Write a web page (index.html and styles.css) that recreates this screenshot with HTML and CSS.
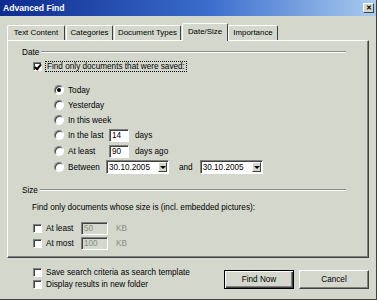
FILE: index.html
```html
<!DOCTYPE html>
<html lang="en">

<head>
    <meta charset="UTF-8">
    <title>Advanced Find</title>
    <link rel="stylesheet" href="styles.css">
</head>

<body>
    <div class="window">
        <div class="titlebar">
            <span class="title">Advanced Find</span>
            <span class="close">&#x2715;</span>
        </div>

        <div class="tabs">
            <div class="tab t-text">Text Content</div>
            <div class="tab t-cat">Categories</div>
            <div class="tab t-doc">Document Types</div>
            <div class="tab t-date active">Date/Size</div>
            <div class="tab t-imp">Importance</div>
        </div>

        <div class="panel">
            <div class="group-head"><span>Date</span><i class="etch"></i></div>

            <div class="row check-row find-only">
                <span class="checkbox checked"></span>
                <span class="focus">Find only documents that were saved:</span>
            </div>

            <div class="radios">
                <div class="row radio-row"><span class="radio on"></span><span>Today</span></div>
                <div class="row radio-row"><span class="radio"></span><span>Yesterday</span></div>
                <div class="row radio-row"><span class="radio"></span><span>In this week</span></div>
                <div class="row radio-row gap2">
                    <span class="radio"></span><span class="lbl">In the last</span>
                    <span class="field small">14</span><span class="after">days</span>
                </div>
                <div class="row radio-row gap2">
                    <span class="radio"></span><span class="lbl">At least</span>
                    <span class="field small">90</span><span class="after">days ago</span>
                </div>
                <div class="row radio-row">
                    <span class="radio"></span><span class="lbl between">Between</span>
                    <span class="combo"><span>30.10.2005</span><b class="drop"></b></span>
                    <span class="and">and</span>
                    <span class="combo"><span>30.10.2005</span><b class="drop"></b></span>
                </div>
            </div>

            <div class="group-head size-head"><span>Size</span><i class="etch"></i></div>
            <div class="row size-text">Find only documents whose size is (incl. embedded pictures):</div>

            <div class="sizes">
                <div class="row check-row">
                    <span class="checkbox"></span><span class="lbl kb">At least</span>
                    <span class="field disabled">50</span><span class="unit">KB</span>
                </div>
                <div class="row check-row">
                    <span class="checkbox"></span><span class="lbl kb">At most</span>
                    <span class="field disabled">100</span><span class="unit">KB</span>
                </div>
            </div>
        </div>

        <div class="footer">
            <div class="options">
                <div class="row check-row"><span class="checkbox"></span><span>Save search criteria as search template</span></div>
                <div class="row check-row"><span class="checkbox"></span><span>Display results in new folder</span></div>
            </div>
            <div class="buttons">
                <button class="btn default">Find Now</button>
                <button class="btn">Cancel</button>
            </div>
        </div>
    </div>
</body>

</html>
```

FILE: styles.css
```css
body {
    margin: 0;
    font-family: "Liberation Sans", Arial, sans-serif;
    font-size: 8.2px;
    color: #000000;
}

.window {
    width: 377px;
    height: 300px;
    box-sizing: border-box;
    background-color: #d3d7cc;
    border-right: 1px solid #404040;
    border-bottom: 1px solid #404040;
    overflow: hidden;
}

.titlebar {
    height: 16px;
    display: flex;
    align-items: center;
    justify-content: space-between;
    padding: 0 2px 0 3px;
    background: linear-gradient(to right, #0d2b8e, #3a6ccc 55%, #a9cbf0);
    color: #ffffff;
}

.title {
    font-weight: bold;
    font-size: 8.6px;
}

.close {
    width: 11px;
    height: 10px;
    box-sizing: border-box;
    background-color: #d3d7cc;
    border: 1px solid;
    border-color: #ffffff #404040 #404040 #ffffff;
    color: #000000;
    font-size: 7px;
    font-weight: bold;
    line-height: 8px;
    text-align: center;
}

/* tab strip */
.tabs {
    display: flex;
    align-items: flex-end;
    height: 17px;
    margin: 7px 0 0 7px;
}

.tab {
    height: 15px;
    box-sizing: border-box;
    font-size: 7.9px;
    line-height: 14px;
    text-align: center;
    white-space: nowrap;
    border: 1px solid;
    border-bottom: none;
    border-color: #ffffff #404040 transparent #ffffff;
    border-radius: 2px 2px 0 0;
    margin-right: 1px;
}

.t-text { width: 58px; }
.t-cat { width: 47px; }
.t-doc { width: 67px; }
.t-date { width: 46px; }
.t-imp { width: 50px; }

.tab.active {
    height: 18px;
    margin: 0 0 -1px 0;
    line-height: 16px;
    background-color: #d3d7cc;
    position: relative;
    z-index: 1;
}

.panel {
    width: 362px;
    height: 218px;
    box-sizing: border-box;
    margin-left: 7px;
    padding: 4px 22px 0 14px;
    border: 1px solid;
    border-color: #ffffff #404040 #404040 #ffffff;
    box-shadow: inset -1px -1px 0 #808080;
}

.row {
    display: flex;
    align-items: center;
    height: 14px;
    white-space: nowrap;
}

.group-head {
    display: flex;
    align-items: center;
    height: 14px;
}

.etch {
    flex: 1;
    height: 0;
    margin-left: 2px;
    border-top: 1px solid #8a8e86;
    border-bottom: 1px solid #ffffff;
}

.check-row {
    padding-left: 11px;
}

.checkbox {
    width: 9px;
    height: 9px;
    box-sizing: border-box;
    margin-right: 4px;
    background-color: #ffffff;
    border: 1px solid;
    border-color: #808080 #ffffff #ffffff #808080;
    box-shadow: inset 1px 1px 0 #404040;
    position: relative;
}

.checkbox.checked::after {
    content: "";
    position: absolute;
    left: 2px;
    top: 0;
    width: 2px;
    height: 5px;
    border: solid #000000;
    border-width: 0 2px 2px 0;
    transform: rotate(40deg);
}

.focus {
    outline: 1px dotted #000000;
    padding: 0 1px;
}

.radios {
    margin-top: 10px;
    padding-left: 32px;
}

.radio-row {
    margin-bottom: 1px;
}

.radio-row.gap2 {
    margin-bottom: 2px;
}

.radio {
    width: 10px;
    height: 10px;
    box-sizing: border-box;
    margin-right: 4px;
    border-radius: 50%;
    background-color: #ffffff;
    border: 1px solid;
    border-color: #808080 #ffffff #ffffff #808080;
    box-shadow: inset 1px 1px 0 #404040;
    position: relative;
}

.radio.on::after {
    content: "";
    position: absolute;
    left: 2px;
    top: 2px;
    width: 4px;
    height: 4px;
    border-radius: 50%;
    background-color: #000000;
}

.lbl {
    width: 41px;
}

.lbl.between {
    width: 38px;
}

.lbl.kb {
    width: 35px;
}

.field {
    height: 13px;
    box-sizing: border-box;
    padding-left: 2px;
    line-height: 11px;
    background-color: #ffffff;
    border: 1px solid;
    border-color: #808080 #ffffff #ffffff #808080;
    box-shadow: inset 1px 1px 0 #404040;
}

.field.small {
    width: 20px;
}

.field.disabled {
    width: 27px;
    background-color: #d3d7cc;
    color: #8a8e86;
}

.after {
    margin-left: 6px;
}

.unit {
    margin-left: 8px;
    color: #8a8e86;
}

.combo {
    width: 63px;
    height: 14px;
    box-sizing: border-box;
    display: flex;
    align-items: center;
    justify-content: space-between;
    padding: 0 1px 0 2px;
    background-color: #ffffff;
    border: 1px solid;
    border-color: #808080 #ffffff #ffffff #808080;
    box-shadow: inset 1px 1px 0 #404040;
}

.drop {
    width: 9px;
    height: 10px;
    box-sizing: border-box;
    background-color: #d3d7cc;
    border: 1px solid;
    border-color: #ffffff #404040 #404040 #ffffff;
    position: relative;
}

.drop::after {
    content: "";
    position: absolute;
    left: 1px;
    top: 3px;
    border-left: 3px solid transparent;
    border-right: 3px solid transparent;
    border-top: 3px solid #000000;
}

.and {
    margin: 0 7px 0 10px;
}

.size-head {
    margin-top: 9px;
}

.size-text {
    margin-top: 3px;
    padding-left: 10px;
}

.sizes {
    margin-top: 7px;
}

.sizes .check-row {
    margin-bottom: 1px;
}

/* bottom area */
.footer {
    display: flex;
    justify-content: space-between;
    padding: 8px 7px 0 33px;
}

.options .check-row {
    padding-left: 0;
    height: 12px;
}

.buttons {
    display: flex;
    gap: 5px;
    padding-top: 4px;
}

.btn {
    width: 70px;
    height: 19px;
    box-sizing: border-box;
    font-family: "Liberation Sans", Arial, sans-serif;
    font-size: 8.2px;
    background-color: #d3d7cc;
    border: 1px solid;
    border-color: #ffffff #404040 #404040 #ffffff;
    box-shadow: inset -1px -1px 0 #808080;
    padding: 0;
}

.btn.default {
    border: 1px solid #000000;
    box-shadow: inset 1px 1px 0 #ffffff, inset -1px -1px 0 #404040, inset -2px -2px 0 #808080;
}
```
